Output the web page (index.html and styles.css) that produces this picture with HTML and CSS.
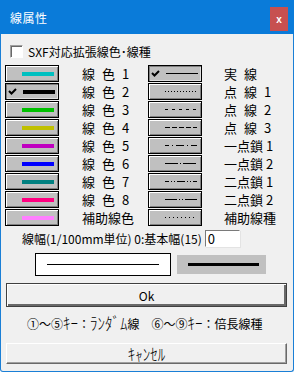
FILE: index.html
```html
<!DOCTYPE html>
<html lang="ja">
<head>
    <meta charset="UTF-8">
    <title>線属性</title>
    <link rel="stylesheet" href="styles.css">
</head>
<body>
    <div class="dialog">
        <div class="titlebar">
            <span class="title">線属性</span>
            <span class="close">x</span>
        </div>

        <div class="content">
            <div class="sxf">
                <span class="checkbox"></span>
                <span>SXF対応拡張線色･線種</span>
            </div>

            <div class="grid">
                <div class="tbtn"><span class="bar c1"></span></div>
                <div class="lbl spaced">線色1</div>
                <div class="tbtn pressed">
                    <svg class="check" width="9" height="7"><path d="M1 3 L3.5 5.5 L8 1" fill="none" stroke="#000" stroke-width="2"/></svg>
                    <svg class="ltype" width="32" height="3"><line x1="0" y1="1.5" x2="32" y2="1.5"/></svg>
                </div>
                <div class="lbl right spaced">実線</div>

                <div class="tbtn pressed">
                    <svg class="check" width="9" height="7"><path d="M1 3 L3.5 5.5 L8 1" fill="none" stroke="#000" stroke-width="2"/></svg>
                    <span class="bar c2"></span>
                </div>
                <div class="lbl spaced">線色2</div>
                <div class="tbtn"><svg class="ltype" width="32" height="3"><line x1="0" y1="1.5" x2="32" y2="1.5" stroke-dasharray="1 2"/></svg></div>
                <div class="lbl right spaced">点線1</div>

                <div class="tbtn"><span class="bar c3"></span></div>
                <div class="lbl spaced">線色3</div>
                <div class="tbtn"><svg class="ltype" width="32" height="3"><line x1="0" y1="1.5" x2="32" y2="1.5" stroke-dasharray="3 4"/></svg></div>
                <div class="lbl right spaced">点線2</div>

                <div class="tbtn"><span class="bar c4"></span></div>
                <div class="lbl spaced">線色4</div>
                <div class="tbtn"><svg class="ltype" width="32" height="3"><line x1="0" y1="1.5" x2="32" y2="1.5" stroke-dasharray="5 2"/></svg></div>
                <div class="lbl right spaced">点線3</div>

                <div class="tbtn"><span class="bar c5"></span></div>
                <div class="lbl spaced">線色5</div>
                <div class="tbtn"><svg class="ltype" width="32" height="3"><line x1="0" y1="1.5" x2="32" y2="1.5" stroke-dasharray="8 3 1 3" stroke-dashoffset="4"/></svg></div>
                <div class="lbl right">一点鎖 1</div>

                <div class="tbtn"><span class="bar c6"></span></div>
                <div class="lbl spaced">線色6</div>
                <div class="tbtn"><svg class="ltype" width="32" height="3"><line x1="0" y1="1.5" x2="32" y2="1.5" stroke-dasharray="13 2 1 2"/></svg></div>
                <div class="lbl right">一点鎖 2</div>

                <div class="tbtn"><span class="bar c7"></span></div>
                <div class="lbl spaced">線色7</div>
                <div class="tbtn"><svg class="ltype" width="32" height="3"><line x1="0" y1="1.5" x2="32" y2="1.5" stroke-dasharray="8 2 1 2 1 2" stroke-dashoffset="4"/></svg></div>
                <div class="lbl right">二点鎖 1</div>

                <div class="tbtn"><span class="bar c8"></span></div>
                <div class="lbl spaced">線色8</div>
                <div class="tbtn"><svg class="ltype" width="32" height="3"><line x1="0" y1="1.5" x2="32" y2="1.5" stroke-dasharray="12 2 1 2 1 2"/></svg></div>
                <div class="lbl right">二点鎖 2</div>

                <div class="tbtn"><span class="bar c9"></span></div>
                <div class="lbl">補助線色</div>
                <div class="tbtn"><svg class="ltype" width="32" height="3"><line x1="0" y1="1.5" x2="32" y2="1.5" stroke-dasharray="1 3"/></svg></div>
                <div class="lbl right">補助線種</div>
            </div>

            <div class="width-row">
                <span>線幅(1/100mm単位) 0:基本幅(15)</span>
                <span class="input">0</span>
            </div>

            <div class="preview">
                <div class="pv-white"><span class="pv-line thin"></span></div>
                <div class="pv-gray"><span class="pv-line thick"></span></div>
            </div>

            <div class="btn default">Ok</div>

            <div class="hint">①～⑤<span class="hw">ｷｰ</span>：<span class="hw">ﾗﾝﾀﾞﾑ</span>線　⑥～⑨<span class="hw">ｷｰ</span>：倍長線種</div>

            <div class="btn"><span class="hw">ｷｬﾝｾﾙ</span></div>
        </div>
    </div>
</body>
</html>
```

FILE: styles.css
```css
body {
    margin: 0;
    font-family: "Noto Sans CJK JP", "Noto Sans", sans-serif;
    font-size: 12px;
    color: #000;
}
.dialog {
    width: 294px;
    height: 372px;
    box-sizing: border-box;
    border: 1px solid #1a7fd6;
    border-top: none;
    border-radius: 0 0 3px 3px;
    background: #f0f0f0;
    display: flex;
    flex-direction: column;
}
.titlebar {
    height: 34px;
    margin: 0 -1px;
    padding: 0 6px 0 10px;
    background: #0a7bd9;
    color: #fff;
    display: flex;
    align-items: center;
    justify-content: space-between;
}
.title {
    font-size: 12px;
    letter-spacing: 0.5px;
}
.close {
    align-self: flex-start;
    margin-top: 7px;
    width: 18px;
    height: 24px;
    background: #c75050;
    font-family: "Liberation Sans", sans-serif;
    font-size: 10px;
    font-weight: bold;
    display: flex;
    align-items: center;
    justify-content: center;
}
.content {
    padding: 0 6px 0 4px;
    display: flex;
    flex-direction: column;
}
.sxf {
    margin: 11px 0 0 5px;
    height: 13px;
    display: flex;
    align-items: center;
    gap: 5px;
    font-size: 12px;
}
.checkbox {
    width: 11px;
    height: 11px;
    background: #fff;
    border: 1px solid;
    border-color: #a0a0a0 #fff #fff #a0a0a0;
    box-shadow: inset 1px 1px #696969;
}
.grid {
    margin-top: 7px;
    display: grid;
    grid-template-columns: 54px 89px 54px 1fr;
    grid-auto-rows: 17px;
    row-gap: 1px;
    align-items: center;
}
.tbtn {
    position: relative;
    height: 17px;
    box-sizing: border-box;
    border: 1px solid #000;
    background: #c0c0c0;
    box-shadow: inset 1px 1px #fff, inset -1px -1px #808080;
    display: flex;
    align-items: center;
    justify-content: flex-end;
    padding-right: 4px;
}
.tbtn.pressed {
    box-shadow: inset 1px 1px #808080, inset -1px -1px #dfdfdf;
    padding-right: 3px;
}
.check {
    position: absolute;
    left: 2px;
    top: 4px;
}
.bar {
    width: 32px;
    height: 4px;
}
.c1 { background: #00c0c0; }
.c2 { background: #000; }
.c3 { background: #00c000; }
.c4 { background: #c0c000; }
.c5 { background: #c000c0; }
.c6 { background: #0000ff; }
.c7 { background: #008080; }
.c8 { background: #ff0080; }
.c9 { background: #ff80ff; }
.ltype {
    display: block;
    stroke: #000;
    stroke-width: 1;
    shape-rendering: crispEdges;
}
.lbl {
    padding-left: 23px;
    font-size: 13px;
    line-height: 17px;
    white-space: nowrap;
}
.lbl.right {
    padding-left: 22px;
}
.lbl.spaced {
    letter-spacing: 7px;
}
.width-row {
    margin-top: 4px;
    padding-left: 17px;
    height: 17px;
    display: flex;
    align-items: center;
    gap: 3px;
    font-size: 12px;
}
.input {
    width: 31px;
    height: 15px;
    line-height: 15px;
    background: #fff;
    border: 1px solid;
    border-color: #7a7a7a #fff #fff #7a7a7a;
    box-shadow: 1px 1px #e3e3e3;
    padding-left: 2px;
    font-size: 13px;
}
.preview {
    margin: 6px 0 0 30px;
    height: 23px;
    display: flex;
    align-items: center;
    gap: 6px;
}
.pv-white {
    width: 136px;
    height: 23px;
    box-sizing: border-box;
    background: #fff;
    border: 1px solid #000;
    display: flex;
    align-items: center;
    padding: 0 11px;
}
.pv-gray {
    width: 89px;
    height: 19px;
    box-sizing: border-box;
    background: #c0c0c0;
    display: flex;
    align-items: center;
    padding: 0 7px 0 11px;
}
.pv-line {
    flex: 1;
    background: #000;
}
.pv-line.thin { height: 1px; }
.pv-line.thick { height: 3px; }
.btn {
    margin: 12px 0 0 1px;
    height: 21px;
    box-sizing: border-box;
    border: 1px solid;
    border-color: #fff #696969 #696969 #fff;
    box-shadow: inset -1px -1px #a0a0a0;
    background: #f0f0f0;
    display: flex;
    align-items: center;
    justify-content: center;
    font-size: 12px;
}
.btn.default {
    margin-top: 7px;
    height: 24px;
    border: 1px solid #404040;
    box-shadow: inset 1px 1px #fff, inset -2px -2px #696969;
}
.hint {
    margin-top: 8px;
    padding-left: 22px;
    height: 16px;
    line-height: 16px;
    font-size: 12px;
    white-space: nowrap;
}
.hw {
    display: inline-block;
    font-size: 15px;
    font-weight: 300;
    transform: scaleY(1.1);
}
```
